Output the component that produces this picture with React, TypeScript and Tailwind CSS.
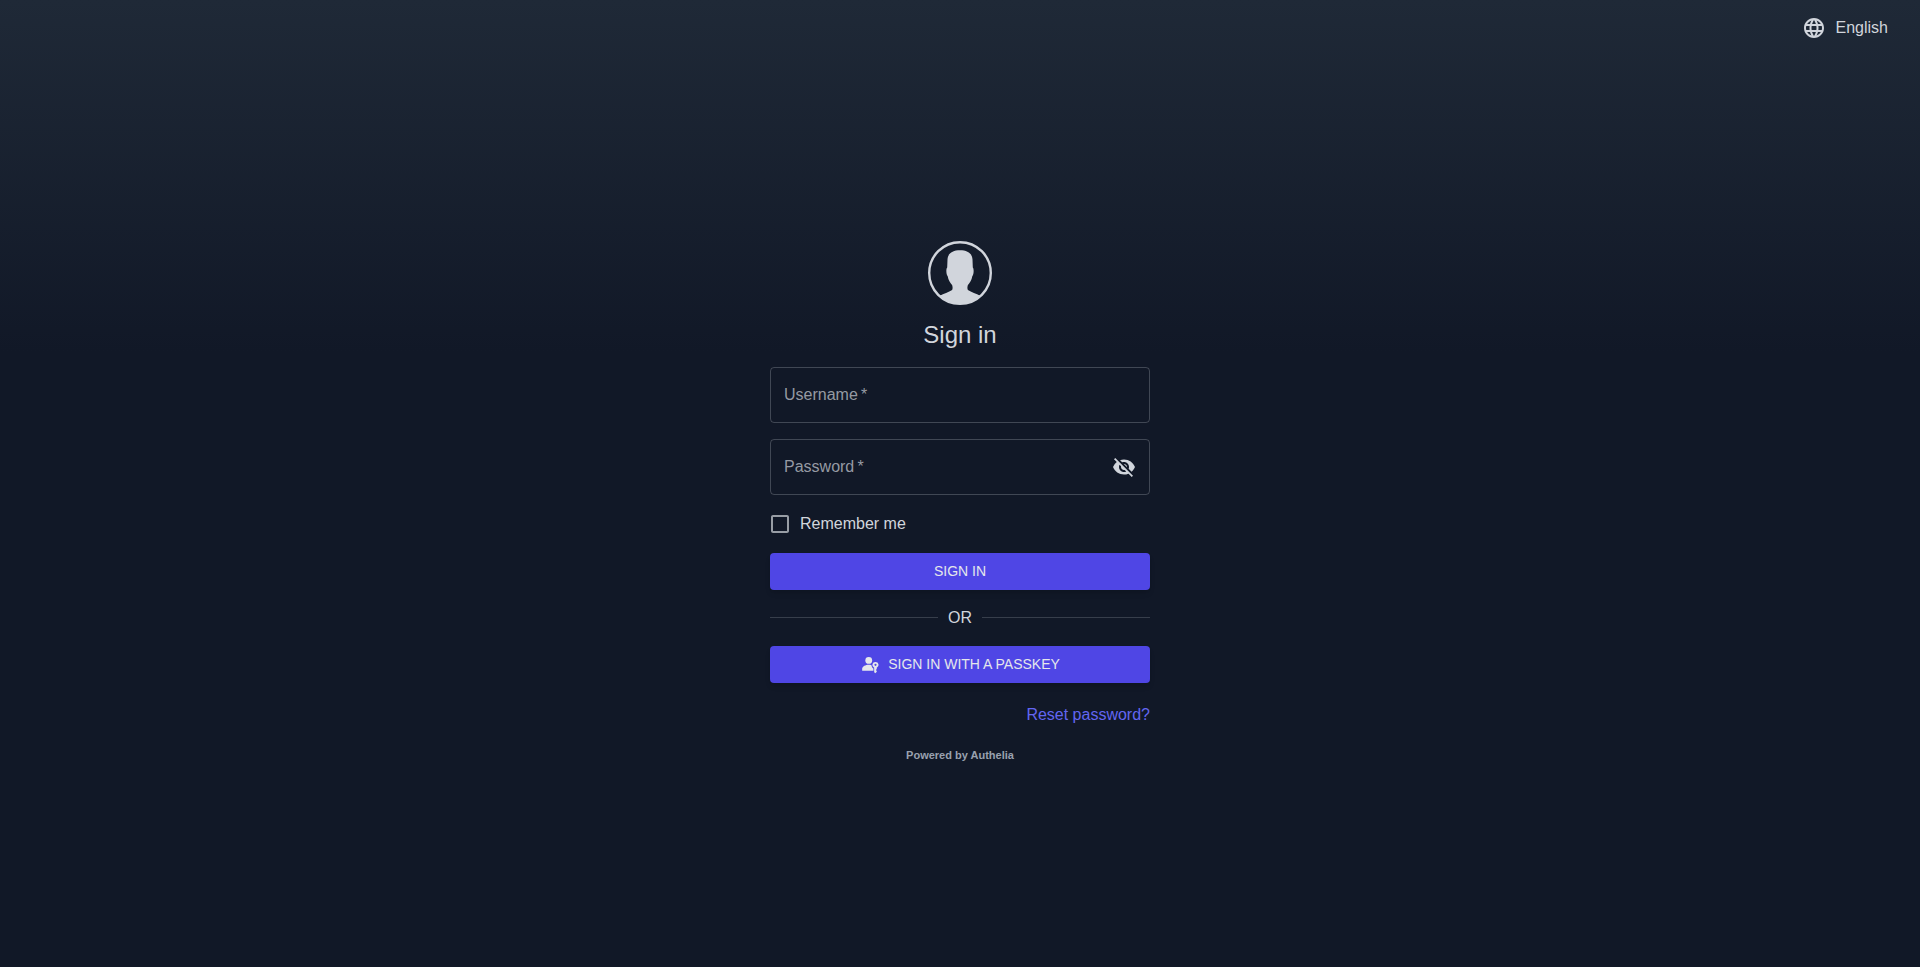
import { useState } from "react";
import { MdCheckBox, MdCheckBoxOutlineBlank, MdLanguage, MdVisibility, MdVisibilityOff } from "react-icons/md";

function UserAvatar() {
  return (
    <svg viewBox="0 0 64 64" className="size-16 text-gray-300" aria-hidden="true">
      <circle cx="32" cy="32" r="30.8" fill="none" stroke="currentColor" strokeWidth="2.4" />
      <path
        fill="currentColor"
        d="M32 9.300c7.200 0 12.300 3 12.500 9.200l.3 8c1.200.8 1.200 7-.5 8.800-.7 3.800-2.400 6.500-4.500 8.900-.6 2.200-.5 3.600.1 4.800 3.300 2.200 8.700 3.600 12.200 5.700A31 31 0 0 1 32 63a31 31 0 0 1-20.100-8.300c3.500-2.100 8.900-3.500 12.200-5.700.6-1.200.7-2.600.1-4.800-2.100-2.400-3.800-5.100-4.500-8.900-1.700-1.800-1.700-8-.5-8.800l.3-8C19.700 12.300 24.800 9.300 32 9.300z"
      />
    </svg>
  );
}

function PasskeyIcon() {
  return (
    <svg viewBox="0 0 24 24" className="size-5" fill="currentColor" aria-hidden="true">
      <circle cx="10.500" cy="7.700" r="4.100" />
      <path d="M2.600 20.200v-2.400c0-3 4.200-4.900 7.900-4.900 1.100 0 2.200.2 3.300.5.200 1.700 1 3 2.300 3.900v2.900z" />
      <path
        fillRule="evenodd"
        d="M18.600 9.500a3.600 3.600 0 0 1 1.500 6.900v1.600l-1 1.100 1 1.200v1l-1.700 1.800-1.400-1.300v-5.400a3.600 3.600 0 0 1 1.600-6.900zm0 2.200a1.300 1.300 0 1 0 0 2.600 1.300 1.300 0 0 0 0-2.600z"
      />
    </svg>
  );
}

const inputClass =
  "peer h-14 w-full rounded border border-gray-300/25 bg-transparent px-3.5 text-base text-gray-300 outline-none focus:border-indigo-500";
const labelClass =
  "pointer-events-none absolute left-3.5 top-4 leading-6 text-gray-300/70 peer-focus:hidden peer-[:not(:placeholder-shown)]:hidden";
const buttonClass =
  "flex h-[37px] w-full items-center justify-center gap-2 rounded bg-[#4f46e5] text-sm font-medium uppercase text-gray-200 shadow-md hover:bg-[#4338ca]";

export default function App() {
  const [visible, setVisible] = useState(false);
  const [remember, setRemember] = useState(false);

  return (
    <div className="flex min-h-screen flex-col bg-[#111827] bg-[linear-gradient(to_bottom,#1f2937,#111827_352px)] font-['Liberation_Sans',Arial,sans-serif] text-base text-gray-300">
      <header className="flex h-14 items-center justify-end px-8">
        <button type="button" className="flex items-center gap-2.5">
          <MdLanguage className="size-6" aria-hidden="true" />
          English
        </button>
      </header>
      <main className="flex flex-1 flex-col items-center justify-center px-4">
        <form className="flex w-full max-w-[380px] flex-col gap-4 pb-4" onSubmit={(e) => e.preventDefault()}>
          <div className="flex flex-col items-center gap-3.5">
            <UserAvatar />
            <h1 className="text-2xl leading-8">Sign in</h1>
          </div>
          <div className="relative">
            <input id="username" name="username" required placeholder=" " autoComplete="username" className={inputClass} />
            <label htmlFor="username" className={labelClass}>{"Username\u2009*"}</label>
          </div>
          <div className="relative">
            <input
              id="password"
              name="password"
              required
              placeholder=" "
              type={visible ? "text" : "password"}
              autoComplete="current-password"
              className={inputClass}
            />
            <label htmlFor="password" className={labelClass}>{"Password\u2009*"}</label>
            <button
              type="button"
              aria-label="Toggle password visibility"
              className="absolute inset-y-0 right-3.5"
              onClick={() => setVisible(!visible)}
            >
              {visible ? <MdVisibility className="size-6" /> : <MdVisibilityOff className="size-6" />}
            </button>
          </div>
          <label className="relative -ml-0.5 flex h-[26px] items-center gap-2 self-start">
            <input
              type="checkbox"
              className="sr-only"
              checked={remember}
              onChange={(e) => setRemember(e.target.checked)}
            />
            {remember ? (
              <MdCheckBox className="size-6 text-[#4f46e5]" aria-hidden="true" />
            ) : (
              <MdCheckBoxOutlineBlank className="size-6 text-gray-300/70" aria-hidden="true" />
            )}
            Remember me
          </label>
          <button type="submit" className={buttonClass}>Sign in</button>
          <div className="flex items-center gap-2.5 leading-6">
            <span className="h-px flex-1 bg-gray-300/20" />
            OR
            <span className="h-px flex-1 bg-gray-300/20" />
          </div>
          <button type="button" className={buttonClass}>
            <PasskeyIcon />
            Sign in with a passkey
          </button>
          <a href="#reset-password" className="mt-1 self-end leading-6 text-[#6366f1]">Reset password?</a>
          <a href="#authelia" className="self-center text-[11px] font-bold leading-6 text-gray-400">Powered by Authelia</a>
        </form>
      </main>
    </div>
  );
}
